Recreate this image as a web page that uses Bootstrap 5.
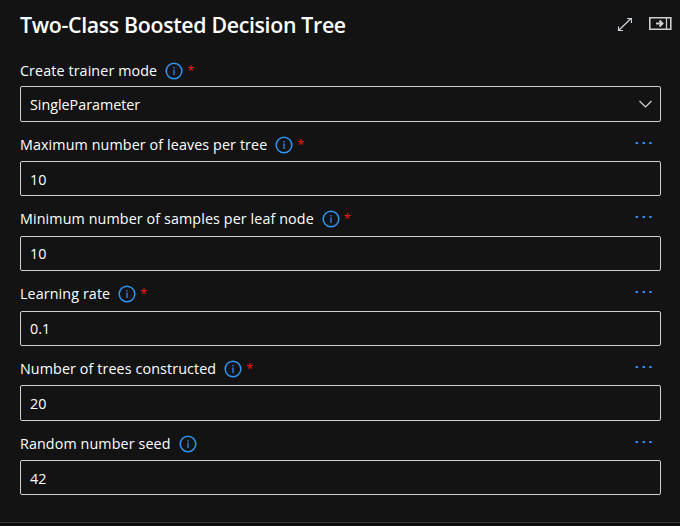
<!DOCTYPE html>
<html lang="en" data-bs-theme="dark">
<head>
<meta charset="utf-8">
<title>Two-Class Boosted Decision Tree</title>
<link href="https://cdn.jsdelivr.net/npm/bootstrap@5.3.0/dist/css/bootstrap.min.css" rel="stylesheet">
<style>
body{background:#131313;color:#fff;font-family:"Segoe UI","Open Sans",sans-serif;font-size:14.3px;line-height:20px;overflow:hidden}
.panel{height:523px;padding:0 19px 0 20px;border-bottom:1px solid #383838}
.below{height:3px;background:#0d0d0d}
.panel-head{height:56px;padding-top:9px}
.panel-title{font-size:21.3px;line-height:32px;font-weight:600;letter-spacing:-.32px}
.tools{margin-right:-11px;padding-top:6px}
.field-head{height:39px;padding-top:13px}
.field-head label{letter-spacing:.11px}
.field-head.first{height:30px;padding-top:5px}
.field-head.tall{height:40px}
.info{margin-left:8px;margin-top:.6px}
.req{color:#f81616;margin-left:4px;font-size:12.5px;font-weight:500;height:20px}
.more{margin-right:9px;margin-top:6px}
.panel .form-control{background:#131313;border:1px solid #d2d0ce;border-radius:2px;color:#fff;height:35px;padding:0 9px;font-size:14.3px;line-height:20px}
.panel .form-control.high{height:36px;padding-top:1px}
.panel .form-control.low-text{padding-top:1px}
.picker{padding-right:7px!important}
</style>
</head>
<body>
<svg class="d-none">
<symbol id="i-info" viewBox="0 0 18 18"><circle cx="9" cy="9" r="7.8" fill="none" stroke="#2e96f5" stroke-width="1.5"/><path d="M9 7.500v5.500M9 5v1.400" stroke="#2e80e8" stroke-width="1.400"/></symbol>
<symbol id="i-more" viewBox="0 0 17 3"><path d="M.5 1h2.500v2H.5zM7.500 1h2.500v2H7.500zM14.200 1h2.500v2h-2.500z" fill="#2e8bef"/></symbol>
</svg>
<main class="panel">
  <header class="panel-head d-flex justify-content-between align-items-start">
    <h1 class="panel-title mb-0">Two-Class Boosted Decision Tree</h1>
    <div class="tools d-flex">
      <svg class="me-3" width="16" height="18" viewBox="0 0 16 18" fill="none" stroke="#d0d4d8" stroke-width="1.2"><path d="M2.500 15.500 15 3.500M11 3.500h4.500v4.500M2.500 11.500v4h4.500"/></svg>
      <svg width="24" height="18" viewBox="0 0 24 18" fill="none" stroke="#cfcfcf"><path d="M1.800 2.700h21v11.600h-21z" stroke-width="1.600"/><path d="M18.500 3v11" stroke-width="1.200"/><path d="M8 8.500h7M11.500 5.500l3 3-3 3" stroke-width="1.900"/></svg>
    </div>
  </header>
  <form>
    <div class="field-head first d-flex align-items-start"><label>Create trainer mode</label><svg class="info" width="18" height="18"><use href="#i-info"/></svg><span class="req">*</span></div>
    <div class="form-control high picker d-flex align-items-center justify-content-between"><span>SingleParameter</span><svg width="15" height="10" viewBox="0 0 15 10" fill="none" stroke="#d4d4d4" stroke-width="1.200"><path d="M1.500 1l6 6 6-6"/></svg></div>

    <div class="field-head d-flex align-items-start"><label>Maximum number of leaves per tree</label><svg class="info" width="18" height="18"><use href="#i-info"/></svg><span class="req">*</span><svg class="more ms-auto" width="17" height="3"><use href="#i-more"/></svg></div>
    <input class="form-control low-text" value="10">

    <div class="field-head tall d-flex align-items-start"><label>Minimum number of samples per leaf node</label><svg class="info" width="18" height="18"><use href="#i-info"/></svg><span class="req">*</span><svg class="more ms-auto" width="17" height="3"><use href="#i-more"/></svg></div>
    <input class="form-control" value="10">

    <div class="field-head tall d-flex align-items-start"><label>Learning rate</label><svg class="info" width="18" height="18"><use href="#i-info"/></svg><span class="req">*</span><svg class="more ms-auto" width="17" height="3"><use href="#i-more"/></svg></div>
    <input class="form-control" value="0.1">

    <div class="field-head d-flex align-items-start"><label>Number of trees constructed</label><svg class="info" width="18" height="18"><use href="#i-info"/></svg><span class="req">*</span><svg class="more ms-auto" width="17" height="3"><use href="#i-more"/></svg></div>
    <input class="form-control high" value="20">

    <div class="field-head d-flex align-items-start"><label>Random number seed</label><svg class="info" width="18" height="18"><use href="#i-info"/></svg><svg class="more ms-auto" width="17" height="3"><use href="#i-more"/></svg></div>
    <input class="form-control low-text" value="42">
  </form>
</main>
<div class="below"></div>
<script src="https://cdn.jsdelivr.net/npm/bootstrap@5.3.0/dist/js/bootstrap.bundle.min.js"></script>
</body>
</html>
